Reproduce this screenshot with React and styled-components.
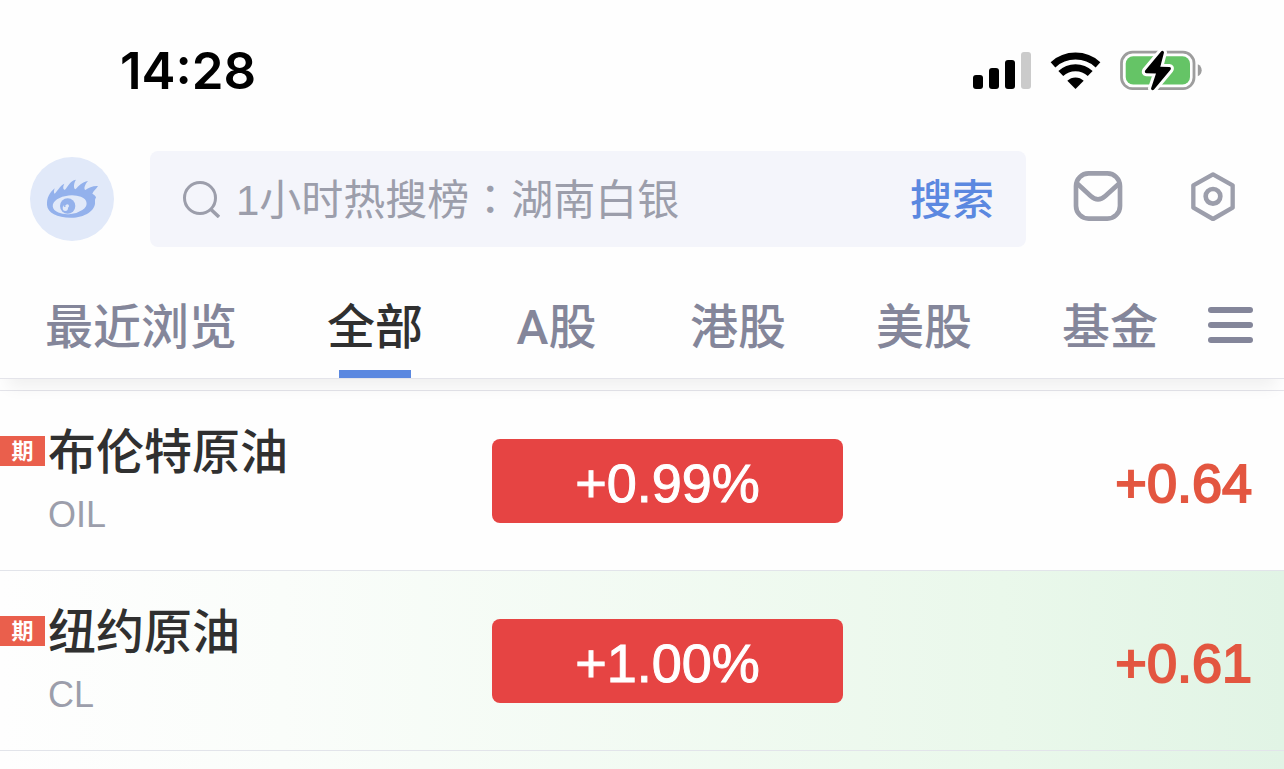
import styled, { createGlobalStyle } from 'styled-components';

const GlobalStyle = createGlobalStyle`
    * {
        box-sizing: border-box;
    }
    body {
        margin: 0;
        background-color: #fefefe;
        font-family: "Liberation Sans", "Noto Sans CJK SC", sans-serif;
    }
    button {
        border: none;
        padding: 0;
        background: none;
        font: inherit;
        cursor: pointer;
    }
    svg {
        display: block;
    }
`

const Page = styled.div`
    min-height: 100vh;
    display: flex;
    flex-direction: column;
`

/* status bar */
const StatusBar = styled.div`
    display: flex;
    align-items: center;
    justify-content: space-between;
    height: 142px;
    padding: 0 82px 0 120px;
`
const Clock = styled.time`
    font-family: Inter, sans-serif;
    font-size: 51px;
    font-weight: 600;
    line-height: 60px;
    color: black;
`
const StatusIcons = styled.div`
    display: flex;
    gap: 19px;
`

/* search row */
const Header = styled.header`
    display: flex;
    align-items: center;
    padding: 9px 46px 27px 30px;
`
const Avatar = styled.button`
    width: 84px;
    height: 84px;
    flex: none;
    margin-right: 36px;
`
const SearchBox = styled.form`
    flex: 1;
    min-width: 0;
    display: flex;
    align-items: center;
    height: 96px;
    padding: 0 32px;
    border-radius: 8px;
    background-color: #f4f5fb;
`
const SearchInput = styled.input`
    flex: 1;
    min-width: 0;
    height: 68px;
    margin: 0 16px;
    padding: 4px 0 0;
    border: none;
    outline: none;
    background: none;
    font-family: "Liberation Sans", "Noto Sans CJK TC", sans-serif;
    font-size: 42px;
    color: #333;
    &::placeholder {
        color: #9c9eab;
        opacity: 1;
    }
`
const SearchButton = styled.button`
    padding-top: 4px;
    font-size: 42px;
    font-weight: 500;
    line-height: 64px;
    color: #5b88e0;
`
const HeaderActions = styled.div`
    display: flex;
    gap: 65px;
    margin-left: 47px;
    padding-bottom: 6px;
`

/* tabs */
const TabBar = styled.nav`
    position: relative;
    display: flex;
    height: 105px;
    border-bottom: 1px solid #e4e4ea;
    background-color: #fefefe;
    box-shadow: 0 16px 16px -8px rgba(0, 0, 0, 0.06);
`
const Tab = styled.button`
    display: flex;
    flex-direction: column;
    align-items: center;
    justify-content: space-between;
    flex: none;
    min-width: 177px;
    padding: 18px 45px 0;
    font-family: Roboto, "Noto Sans CJK SC", sans-serif;
    font-size: 48px;
    font-weight: 500;
    line-height: 72px;
    white-space: nowrap;
    color: ${props => props.$active ? "#303030" : "#84869a"};
    &::after {
        content: "";
        width: 72px;
        height: 8px;
        background-color: ${props => props.$active ? "#5b88e0" : "transparent"};
    }
`
const MenuButton = styled.button`
    padding: 0 5px 2px;
`

/* quotes */
const Quotes = styled.table`
    display: block;
    margin-top: 11px;
    border-top: 1px solid #e4e4ea;
`
const QuoteBody = styled.tbody`
    display: block;
`
const QuoteRow = styled.tr`
    display: grid;
    grid-template-columns: 492fr 351fr 441fr;
    align-items: center;
    height: 180px;
    border-bottom: 1px solid #e2e4ea;
    background: ${props => props.$flash ? "linear-gradient(to right, #fefefe 0%, #fafdfa 22%, #eaf8eb 78%, #e1f4e5 100%)" : "none"};
`
const NameCell = styled.th`
    display: grid;
    grid-template-columns: 45px 1fr;
    column-gap: 3px;
    align-items: center;
    padding: 4px 0 0;
    text-align: left;
    font-weight: 400;
`
const Tag = styled.span`
    height: 30px;
    margin-bottom: 4px;
    background-color: #ea5f4c;
    font-size: 22px;
    font-weight: 700;
    line-height: 32px;
    text-align: center;
    color: white;
`
const Name = styled.span`
    font-size: 48px;
    font-weight: 500;
    line-height: 64px;
    white-space: nowrap;
    color: #303030;
`
const Code = styled.span`
    grid-column: 2;
    font-size: 36px;
    line-height: 60px;
    color: #9c9eab;
`
const PercentCell = styled.td`
    padding: 0;
`
const Percent = styled.div`
    height: 84px;
    border-radius: 8px;
    background-color: #e64443;
    font-size: 54px;
    line-height: 88px;
    text-align: center;
    color: white;
    -webkit-text-stroke: 1px white;
`
const ChangeCell = styled.td`
    padding: 4px 32px 0 0;
    font-size: 54px;
    line-height: 84px;
    text-align: right;
    color: #e35640;
    -webkit-text-stroke: 2px #e35640;
`
const NextRow = styled.div`
    flex: 1;
    background: linear-gradient(to right, #fefefe 0%, #fafdfa 22%, #eaf8eb 78%, #e1f4e5 100%);
`

const SignalIcon = () => (
    <svg width="58" height="42" viewBox="0 0 58 42">
        <rect x="0" y="25" width="10" height="14" rx="3"/>
        <rect x="16" y="18" width="10" height="21" rx="3"/>
        <rect x="32" y="10" width="10" height="29" rx="3"/>
        <rect x="48" y="2" width="10" height="37" rx="3" fill="#cbcbcb"/>
    </svg>
)

const WifiIcon = () => (
    <svg width="51" height="42" viewBox="0 0 51 42">
        <path d="M3 14.8A33.5 33.5 0 0 1 48 14.8" fill="none" stroke="black" strokeWidth="7"/>
        <path d="M10.8 23.6A21.2 21.2 0 0 1 40.2 23.6" fill="none" stroke="black" strokeWidth="7"/>
        <path d="M25.5 39L17.3 30.8A11.7 11.7 0 0 1 33.7 30.8Z"/>
    </svg>
)

const BatteryIcon = () => (
    <svg width="82" height="42" viewBox="0 0 82 42">
        <rect x="1.5" y="2.2" width="72.5" height="36.4" rx="11" fill="none" stroke="#9d9d9d" strokeWidth="2.8"/>
        <path d="M77.8 14.3C83 16.5 83 24 77.8 26.2Z" fill="#9d9d9d"/>
        <rect x="5.7" y="6.3" width="64.3" height="28.2" rx="7.5" fill="#65c466"/>
        <path
            d="M41.3 1.2L25.2 20.5Q24 22.8 26.5 23.2L36 23.5L31 38.5Q31.5 41 33.8 39.7L50.5 19.8Q51.7 17.3 49.2 17L40.3 16.7L44 2.5Q43.5 0 41.3 1.2Z"
            stroke="#fefefe"
            strokeWidth="6"
            strokeLinejoin="round"
            paintOrder="stroke"
        />
    </svg>
)

const EyeLogo = () => (
    <svg width="84" height="84" viewBox="30 36 252 252">
        <circle cx="156" cy="162" r="126" fill="#e1e9f9"/>
        <path
            fill="#93b1ec"
            d="M81 180C80 160 88 143 104 130C101 139 101 144 104 146C112 139 118 124 133 116C128 126 129 134 135 134C144 124 150 107 168 104C161 114 160 130 166 133C176 124 186 110 204 108C195 117 190 132 196 135C206 129 218 122 234 123C228 133 220 138 217 146C224 150 228 154 228 158C225 160 225 164 225 170C228 198 190 219 152 218C112 218 82 204 81 180Z"
        />
        <ellipse cx="149" cy="179" rx="51" ry="28" transform="rotate(-6 149 179)" fill="#e1e9f9"/>
        <circle cx="143" cy="183" r="23" fill="#93b1ec"/>
        <ellipse cx="136" cy="189" rx="8" ry="9" fill="#e1e9f9"/>
        <circle cx="142" cy="183" r="5" fill="#e1e9f9"/>
        <circle cx="134" cy="183" r="3" fill="#93b1ec"/>
    </svg>
)

const SearchIcon = () => (
    <svg width="38" height="38" viewBox="0 0 38 38" fill="none" stroke="#9c9eab" strokeWidth="3">
        <circle cx="18" cy="18" r="15.5"/>
        <path d="M28.5 29L37 37" strokeWidth="3.5"/>
    </svg>
)

const MailIcon = () => (
    <svg width="50" height="50" viewBox="99 63 150 150" fill="none" stroke="#9c9eab" strokeWidth="14">
        <rect x="108" y="70" width="132" height="136" rx="38"/>
        <path d="M109 98L152 138Q174 158 196 138L240 98"/>
    </svg>
)

const SettingsIcon = () => (
    <svg width="50" height="50" viewBox="443 63 150 150" fill="none" stroke="#9c9eab" strokeWidth="13" strokeLinejoin="round">
        <path d="M518 73L577 106V173L518 207L459 173V106Z"/>
        <circle cx="518" cy="139" r="22" strokeWidth="14"/>
    </svg>
)

const MenuIcon = () => (
    <svg width="45" height="38" viewBox="0 0 45 38" fill="#84869a">
        <rect x="0" y="1" width="45" height="6" rx="3"/>
        <rect x="0" y="16" width="45" height="6" rx="3"/>
        <rect x="0" y="31" width="45" height="6" rx="3"/>
    </svg>
)

const tabs = ["最近浏览", "全部", "A股", "港股", "美股", "基金"]

const quotes = [
    { name: "布伦特原油", code: "OIL", percent: "+0.99%", change: "+0.64", flash: false },
    { name: "纽约原油", code: "CL", percent: "+1.00%", change: "+0.61", flash: true },
]

const App = () => {
  return (
    <Page>
        <GlobalStyle/>
        <StatusBar>
            <Clock>14:28</Clock>
            <StatusIcons>
                <SignalIcon/>
                <WifiIcon/>
                <BatteryIcon/>
            </StatusIcons>
        </StatusBar>
        <Header>
            <Avatar aria-label="我的"><EyeLogo/></Avatar>
            <SearchBox onSubmit={e => e.preventDefault()}>
                <SearchIcon/>
                <SearchInput type="text" aria-label="搜索" placeholder="1小时热搜榜：湖南白银"/>
                <SearchButton type="submit">搜索</SearchButton>
            </SearchBox>
            <HeaderActions>
                <button aria-label="消息"><MailIcon/></button>
                <button aria-label="设置"><SettingsIcon/></button>
            </HeaderActions>
        </Header>
        <TabBar>
            {tabs.map(tab => (
                <Tab key={tab} $active={tab === "全部"}>{tab}</Tab>
            ))}
            <MenuButton aria-label="更多"><MenuIcon/></MenuButton>
        </TabBar>
        <Quotes>
            <QuoteBody>
                {quotes.map(item => (
                    <QuoteRow key={item.code} $flash={item.flash}>
                        <NameCell scope="row">
                            <Tag>期</Tag>
                            <Name>{item.name}</Name>
                            <Code>{item.code}</Code>
                        </NameCell>
                        <PercentCell>
                            <Percent>{item.percent}</Percent>
                        </PercentCell>
                        <ChangeCell>{item.change}</ChangeCell>
                    </QuoteRow>
                ))}
            </QuoteBody>
        </Quotes>
        <NextRow/>
    </Page>
  )
}

export default App
